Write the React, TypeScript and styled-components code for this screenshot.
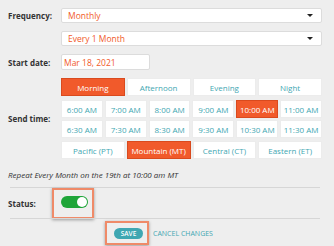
import React, { useState } from 'react';
import styled, { createGlobalStyle } from 'styled-components';

const ORANGE = '#f15a2b';
const TEAL = '#3fa7b2';

const GlobalStyle = createGlobalStyle`
  html, body {
    margin: 0;
    padding: 0;
    background: #eeeeee;
    font-family: 'Open Sans', 'Noto Sans', sans-serif;
  }
`;

const Page = styled.div`
  width: 334px;
  height: 246px;
  box-sizing: border-box;
  padding: 8px 12px 0 8px;
  display: flex;
  flex-direction: column;
`;

const Row = styled.div<{ $gap?: number }>`
  display: flex;
  align-items: center;
  margin-top: ${(p) => p.$gap ?? 0}px;
`;

const Label = styled.div<{ $w?: number }>`
  width: ${(p) => p.$w ?? 53}px;
  flex: none;
  font-size: 8px;
  font-weight: 700;
  color: #333;
`;

const Select = styled.div`
  flex: 1;
  height: 15px;
  box-sizing: border-box;
  background: #fff;
  border: 1px solid #dcdcdc;
  border-radius: 2px;
  display: flex;
  align-items: center;
  justify-content: space-between;
  padding: 0 8px 0 6px;
  font-size: 8.5px;
  color: ${ORANGE};
`;

const Caret = styled.span`
  width: 0;
  height: 0;
  border-left: 3px solid transparent;
  border-right: 3px solid transparent;
  border-top: 3px solid #222;
`;

const DateInput = styled.div`
  width: 89px;
  height: 16px;
  box-sizing: border-box;
  background: #fff;
  border: 1px solid #dcdcdc;
  border-radius: 2px;
  padding-left: 2px;
  display: flex;
  align-items: center;
  font-size: 8.5px;
  color: ${ORANGE};
`;

const Groups = styled.div`
  flex: 1;
  display: flex;
  flex-direction: column;
`;

const BtnRow = styled.div<{ $cols: number; $gap: number }>`
  display: grid;
  grid-template-columns: repeat(${(p) => p.$cols}, 1fr);
  column-gap: 2px;
  margin-top: ${(p) => p.$gap}px;
`;

const Btn = styled.div<{ $active?: boolean }>`
  height: 18px;
  box-sizing: border-box;
  display: flex;
  align-items: center;
  justify-content: center;
  font-size: 8px;
  background: ${(p) => (p.$active ? ORANGE : '#fff')};
  color: ${(p) => (p.$active ? '#fff' : TEAL)};
  border: 1px solid ${(p) => (p.$active ? '#d94a1e' : '#ececec')};
`;

const Note = styled.div`
  margin-top: 10px;
  font-size: 8px;
  font-style: italic;
  color: #333;
`;

const Divider = styled.div<{ $top: number }>`
  margin: ${(p) => p.$top}px 2px 0 2px;
  height: 1px;
  background: #d6d6d6;
`;

const Highlight = styled.div`
  display: flex;
  box-sizing: border-box;
  border: 2px solid #ef8a68;
  box-shadow: 0 1px 3px rgba(0, 0, 0, 0.35);
`;

const ToggleBox = styled(Highlight)`
  width: 42px;
  height: 31px;
  align-items: flex-start;
  padding: 6px 0 0 7px;
`;

const Toggle = styled.div`
  width: 27px;
  height: 12px;
  border-radius: 6px;
  background: #1fa539;
  position: relative;
`;

const Knob = styled.div`
  position: absolute;
  right: 1px;
  top: 1px;
  width: 10px;
  height: 10px;
  border-radius: 50%;
  background: #fff;
`;

const Actions = styled.div`
  display: flex;
  align-items: center;
  margin-top: 2px;
  padding-left: 97px;
`;

const SaveBox = styled(Highlight)`
  width: 44px;
  height: 24px;
  align-items: center;
  padding-left: 7px;
`;

const SaveBtn = styled.div`
  width: 29px;
  height: 11px;
  border-radius: 6px;
  background: ${TEAL};
  color: #fff;
  font-size: 6.5px;
  font-weight: 600;
  display: flex;
  align-items: center;
  justify-content: center;
`;

const Cancel = styled.div`
  margin-left: 4px;
  font-size: 7px;
  color: ${TEAL};
`;

const periods = ['Morning', 'Afternoon', 'Evening', 'Night'];
const row1 = ['6:00 AM', '7:00 AM', '8:00 AM', '9:00 AM', '10:00 AM', '11:00 AM'];
const row2 = ['6:30 AM', '7:30 AM', '8:30 AM', '9:30 AM', '10:30 AM', '11:30 AM'];
const zones = ['Pacific (PT)', 'Mountain (MT)', 'Central (CT)', 'Eastern (ET)'];

export default function App() {
  const [period] = useState('Morning');
  const [time] = useState('10:00 AM');
  const [zone] = useState('Mountain (MT)');

  return (
    <>
      <GlobalStyle />
      <Page>
        <Row>
          <Label>Frequency:</Label>
          <Select>
            Monthly
            <Caret />
          </Select>
        </Row>
        <Row $gap={8}>
          <Label />
          <Select>
            Every 1 Month
            <Caret />
          </Select>
        </Row>
        <Row $gap={8}>
          <Label>Start date:</Label>
          <DateInput>Mar 18, 2021</DateInput>
        </Row>
        <Row $gap={8}>
          <Label>Send time:</Label>
          <Groups>
            <BtnRow $cols={4} $gap={0}>
              {periods.map((p) => (
                <Btn key={p} $active={p === period}>{p}</Btn>
              ))}
            </BtnRow>
            <BtnRow $cols={6} $gap={4}>
              {row1.map((t) => (
                <Btn key={t} $active={t === time}>{t}</Btn>
              ))}
            </BtnRow>
            <BtnRow $cols={6} $gap={2}>
              {row2.map((t) => (
                <Btn key={t} $active={t === time}>{t}</Btn>
              ))}
            </BtnRow>
            <BtnRow $cols={4} $gap={3}>
              {zones.map((z) => (
                <Btn key={z} $active={z === zone}>{z}</Btn>
              ))}
            </BtnRow>
          </Groups>
        </Row>
        <Note>Repeat Every Month on the 19th at 10:00 am MT</Note>
        <Divider $top={7} />
        <Row $gap={0}>
          <Label $w={44}>Status:</Label>
          <ToggleBox>
            <Toggle>
              <Knob />
            </Toggle>
          </ToggleBox>
        </Row>
        <Divider $top={-1} />
        <Actions>
          <SaveBox>
            <SaveBtn>SAVE</SaveBtn>
          </SaveBox>
          <Cancel>CANCEL CHANGES</Cancel>
        </Actions>
      </Page>
    </>
  );
}
